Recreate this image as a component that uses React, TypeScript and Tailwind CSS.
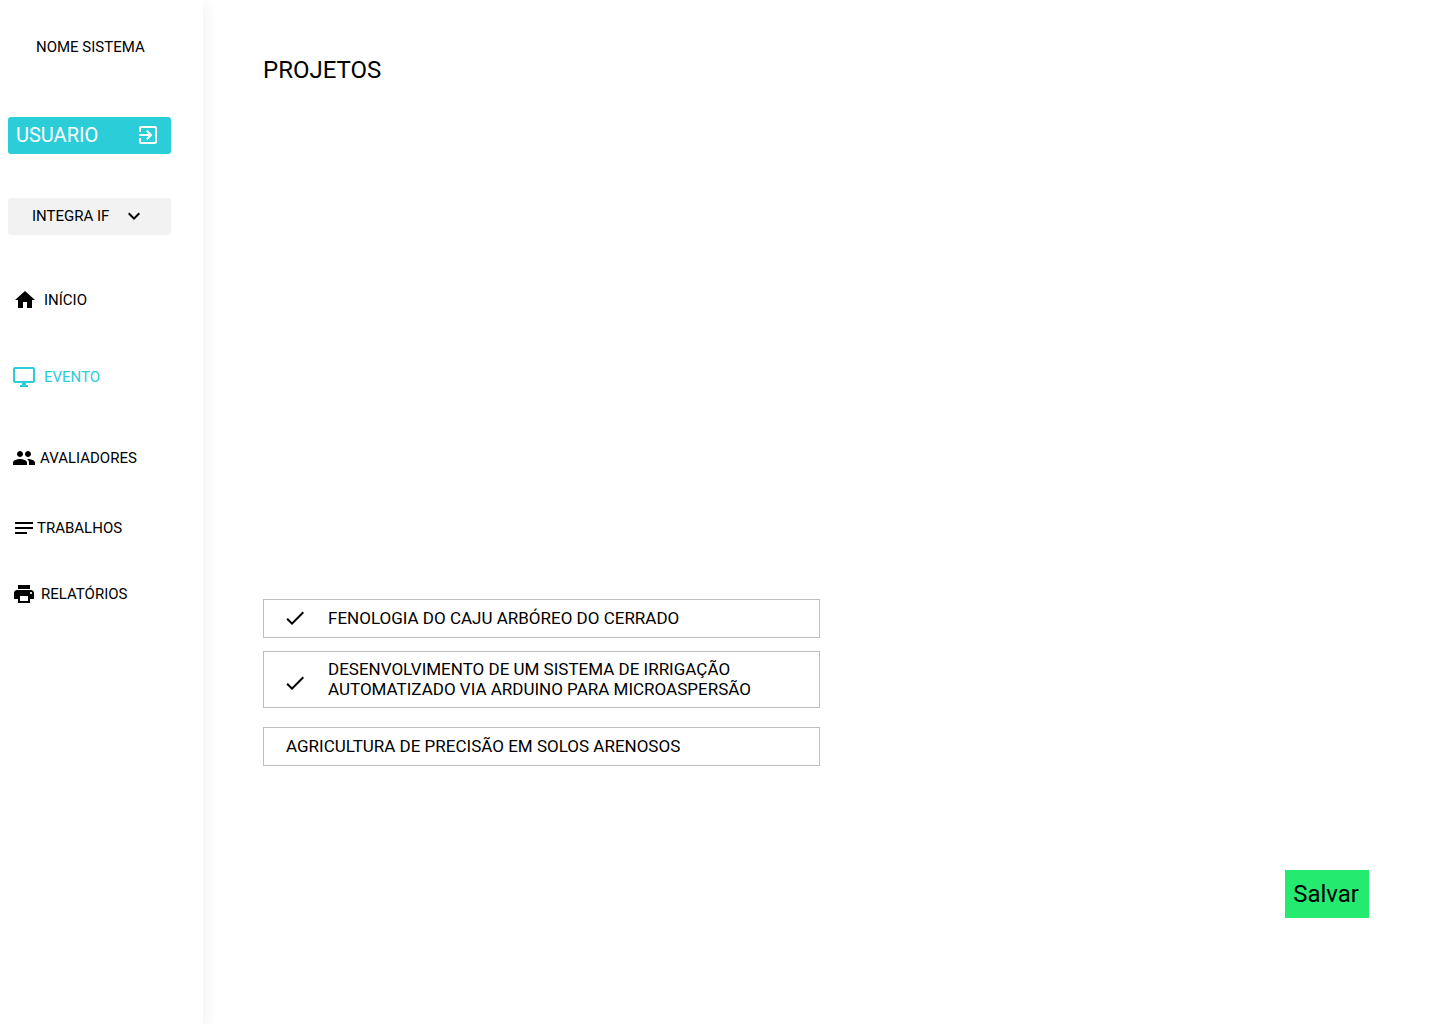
import { useState } from "react";
import { MdExitToApp, MdExpandMore, MdHome, MdPeople, MdNotes, MdPrint, MdCheck, MdOutlineDesktopWindows } from "react-icons/md";

const links = [
  { label: "INÍCIO", icon: MdHome, box: "mt-[53px] pl-[13px] gap-[7px]" },
  { label: "EVENTO", icon: MdOutlineDesktopWindows, box: "mt-[53px] pl-3 gap-2 text-[#2bcdd9]" },
  { label: "AVALIADORES", icon: MdPeople, box: "mt-[57px] pl-3 gap-1" },
  { label: "TRABALHOS", icon: MdNotes, box: "mt-[46px] pl-3 gap-px" },
  { label: "RELATÓRIOS", icon: MdPrint, box: "mt-[42px] pl-3 gap-[5px]" },
];

const projects = [
  { title: "FENOLOGIA DO CAJU ARBÓREO DO CERRADO", checked: true, box: "pt-2 pb-[9px]", tick: "" },
  {
    title: "DESENVOLVIMENTO DE UM SISTEMA DE IRRIGAÇÃO AUTOMATIZADO VIA ARDUINO PARA MICROASPERSÃO",
    checked: true,
    box: "mt-[13px] pt-[7px] pb-2",
    tick: "mt-1",
  },
  { title: "AGRICULTURA DE PRECISÃO EM SOLOS ARENOSOS", checked: false, box: "mt-[19px] pt-2 pb-[9px]", tick: "" },
];

function ProjectRow({ title, checked: initial, box, tick }: (typeof projects)[number]) {
  const [checked, setChecked] = useState(initial);
  return (
    <li>
      <label className={`relative flex items-center border border-[#bdbdbd] pl-[22px] has-focus-visible:border-black ${box}`}>
        <input type="checkbox" checked={checked} onChange={() => setChecked(!checked)} className="sr-only" />
        {checked && <MdCheck size={24} className={`-my-1 mr-[21px] -ml-[3px] shrink-0 ${tick}`} />}
        <span className="max-w-[440px]">{title}</span>
      </label>
    </li>
  );
}

export default function App() {
  return (
    <div className="flex min-h-screen bg-white font-['Roboto',sans-serif] text-black">
      <aside className="w-[203px] shrink-0 shadow-[4px_4px_15px_rgba(0,0,0,0.05)]">
        <p className="mt-9 pl-9 text-[15px] leading-[22px]">NOME SISTEMA</p>
        <button className="mt-[59px] ml-2 flex h-[37px] w-[163px] items-center justify-between rounded-[3px] bg-[#2bcdd9] pr-[11px] pb-px pl-2 text-xl text-white">
          USUARIO
          <MdExitToApp size={24} />
        </button>
        <button className="mt-11 ml-2 flex h-[37px] w-[163px] items-center gap-[13px] rounded-[3px] bg-[#f2f2f2] pb-px pl-6 text-[15px] leading-6">
          INTEGRA IF
          <MdExpandMore size={24} />
        </button>
        <nav>
          {links.map(({ label, icon: Icon, box }) => (
            <a key={label} href="#" className={`flex h-6 items-center text-[15px] ${box}`}>
              <Icon size={24} />
              {label}
            </a>
          ))}
        </nav>
      </aside>
      <main className="flex flex-1 flex-col pr-[71px] pl-[60px]">
        <h1 className="mt-[54px] text-2xl leading-8">PROJETOS</h1>
        <ul className="mt-[513px] max-w-[557px] text-[17px] leading-5">
          {projects.map((p) => (
            <ProjectRow key={p.title} {...p} />
          ))}
        </ul>
        <button className="mt-[104px] h-12 self-end bg-[#24eb70] pr-2.5 pl-2 text-2xl">Salvar</button>
      </main>
    </div>
  );
}
